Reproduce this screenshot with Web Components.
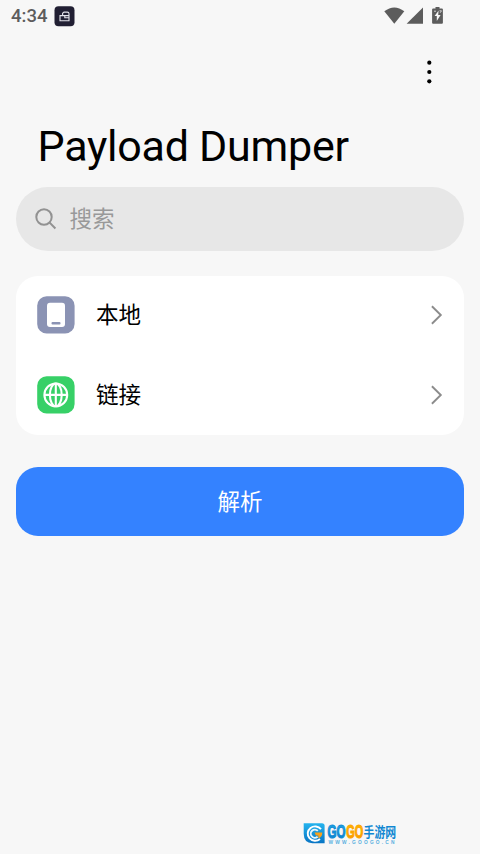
<!DOCTYPE html>
<html lang="zh-CN">
<head>
<meta charset="utf-8">
<meta name="viewport" content="width=device-width, initial-scale=1">
<title>Payload Dumper</title>
<style>
  html, body {
    margin: 0;
    height: 100%;
    background-color: #f7f7f7;
  }
  body {
    overflow: hidden;
    font-family: Roboto, "Noto Sans CJK SC", sans-serif;
    color: #000;
  }
</style>
</head>
<body>
<payload-app></payload-app>
<script>
class StatusBar extends HTMLElement {
  constructor() {
    super()
    this.attachShadow({ mode: "open" })
  }
  connectedCallback() {
    this.shadowRoot.innerHTML = `
      <style>
        :host {
          display: flex;
          align-items: center;
          justify-content: space-between;
          height: 32px;
          padding: 0 36px 0 11px;
          box-sizing: border-box;
          color: #5c5c5c;
        }
        .left, .right {
          display: flex;
          align-items: center;
        }
        .left { gap: 7px; }
        .time {
          font-size: 18.5px;
          font-weight: 500;
          line-height: 32px;
        }
        svg { display: block; }
      </style>
      <div class="left">
        <span class="time">${this.getAttribute("time")}</span>
        <svg width="21" height="21" viewBox="0 0 21 21">
          <rect x=".5" y=".2" width="20" height="20" rx="4" fill="#211f33"/>
          <path d="M6 14.8V9.6h9v5.2zM8.6 9.6V7.3l1.4-1.2h3.4q1.6 0 1.6 1.6v2M10.8 9.6v2.2H15" fill="none" stroke="#e4e4ec" stroke-width="1.1"/>
        </svg>
      </div>
      <div class="right">
        <svg width="60" height="20" viewBox="384 6 60 20" fill="#5c5c5c">
          <path d="M384.3 11.2Q394.3 3.6 404.3 11.2L394.3 23.8z"/>
          <path d="M423 7.4V23.8H406.6z"/>
          <path d="M435.5 7h4v1.6h2.4q1 0 1 1v13.2q0 1-1 1h-8.8q-1 0-1-1V9.6q0-1 1-1h2.4z"/>
          <path d="M438.6 10.4l-4 5.7h2.2v5l3.8-6.2h-2.4z" fill="#f7f7f7"/>
          <path d="M434 11.2h2M439.5 10.8h2l-1.4 2" fill="none" stroke="#dcdcdc" stroke-width=".9"/>
        </svg>
      </div>
    `
  }
}
customElements.define("status-bar", StatusBar)

class TopBar extends HTMLElement {
  constructor() {
    super()
    this.attachShadow({ mode: "open" })
  }
  connectedCallback() {
    this.shadowRoot.innerHTML = `
      <style>
        :host {
          display: block;
          height: 155px;
        }
        .actions {
          display: flex;
          justify-content: flex-end;
          align-items: center;
          height: 80px;
          padding-right: 41px;
        }
        h1 {
          margin: 6px 0 0 37.5px;
          font-size: 43px;
          font-weight: 400;
          line-height: 56px;
          letter-spacing: -.25px;
          white-space: nowrap;
        }
      </style>
      <div class="actions">
        <svg width="20" height="28" viewBox="0 0 20 28">
          <circle cx="10.3" cy="4.7" r="2.1"/>
          <circle cx="10.3" cy="14" r="2.1"/>
          <circle cx="10.3" cy="23.3" r="2.1"/>
        </svg>
      </div>
      <h1><slot></slot></h1>
    `
  }
}
customElements.define("top-bar", TopBar)

class SearchBox extends HTMLElement {
  constructor() {
    super()
    this.attachShadow({ mode: "open" })
  }
  connectedCallback() {
    this.shadowRoot.innerHTML = `
      <style>
        :host {
          display: flex;
          align-items: center;
          gap: 12.5px;
          height: 63.5px;
          padding-left: 19px;
          border-radius: 32px;
          box-sizing: border-box;
          background-color: #e7e7e7;
          color: #999;
          font-size: 22.5px;
          line-height: 32px;
        }
      </style>
      <svg width="22" height="22" viewBox="0 0 22 22" fill="none" stroke="#929292" stroke-width="2">
        <circle cx="9" cy="9" r="7.7"/>
        <path d="M14.4 14.4l6 6.1"/>
      </svg>
      <slot></slot>
    `
  }
}
customElements.define("search-box", SearchBox)

class ListCard extends HTMLElement {
  constructor() {
    super()
    this.attachShadow({ mode: "open" })
  }
  connectedCallback() {
    this.shadowRoot.innerHTML = `
      <style>
        :host {
          display: block;
          border-radius: 22px;
          background-color: #fff;
        }
      </style>
      <slot></slot>
    `
  }
}
customElements.define("list-card", ListCard)

class ListItem extends HTMLElement {
  constructor() {
    super()
    this.attachShadow({ mode: "open" })
  }
  connectedCallback() {
    this.shadowRoot.innerHTML = `
      <style>
        :host {
          display: flex;
          align-items: center;
          height: 79.75px;
          padding: 0 20.5px 0 21px;
          box-sizing: border-box;
        }
        ::slotted(svg) {
          flex: none;
        }
        .label {
          flex: 1;
          margin-left: 21px;
          font-size: 22.5px;
          line-height: 32px;
        }
      </style>
      <slot name="icon"></slot>
      <span class="label"><slot></slot></span>
      <svg width="14" height="20" viewBox="0 0 14 20">
        <path d="M1.9 1.2L10.8 10l-8.9 8.8" fill="none" stroke="#8c8c8c" stroke-width="1.9"/>
      </svg>
    `
  }
}
customElements.define("list-item", ListItem)

class PrimaryButton extends HTMLElement {
  constructor() {
    super()
    this.attachShadow({ mode: "open" })
  }
  connectedCallback() {
    this.shadowRoot.innerHTML = `
      <style>
        :host { display: block; }
        button {
          display: block;
          width: 100%;
          height: 68.5px;
          padding: 2px 0 0;
          border: 0;
          border-radius: 22px;
          background-color: #3482ff;
          color: #fff;
          font-family: inherit;
          font-size: 22.5px;
          line-height: 32px;
          cursor: pointer;
        }
      </style>
      <button><slot></slot></button>
    `
  }
}
customElements.define("primary-button", PrimaryButton)

class SiteMark extends HTMLElement {
  constructor() {
    super()
    this.attachShadow({ mode: "open" })
  }
  connectedCallback() {
    this.shadowRoot.innerHTML = `
      <style>
        :host { display: block; }
        svg { display: block; }
        text { font-family: "Liberation Sans", "Noto Sans CJK SC", sans-serif; font-weight: 700; }
      </style>
      <svg width="96" height="32" viewBox="0 -6 96 32">
        <defs>
          <linearGradient id="blue" x1="0" y1="0" x2="0" y2="1">
            <stop offset="0" stop-color="#25b4ee"/>
            <stop offset="1" stop-color="#0874c4"/>
          </linearGradient>
          <linearGradient id="gold" x1="0" y1="0" x2="0" y2="1">
            <stop offset="0" stop-color="#ffc400"/>
            <stop offset="1" stop-color="#f98b00"/>
          </linearGradient>
        </defs>
        <path d="M.7 1.2H19q2.6 0 2.6 2.6v17.5H9.5Q.7 21 .7 11.5z" fill="url(#blue)"/>
        <path d="M18 7.2A7.4 7.2 0 1 0 17 17" fill="none" stroke="#fff" stroke-width="1.9"/>
        <path d="M14.8 8.8A4.1 4.1 0 1 0 14.6 14.8" fill="none" stroke="#e6f7ff" stroke-width="1.9"/>
        <path d="M11.5 10.6h7.8q0 4.6-4 5.7v-2.8h-2.4z" fill="#f9a11b"/>
        <text x="24.5" y="16" font-size="17.5" textLength="18" lengthAdjust="spacingAndGlyphs" fill="url(#blue)" stroke="#108bd5" stroke-width="1.1">GO</text>
        <text x="43.3" y="16" font-size="17.5" textLength="17" lengthAdjust="spacingAndGlyphs" fill="url(#gold)" stroke="#fda500" stroke-width="1.1">GO</text>
        <g transform="translate(60.6 15.2) scale(.8 1)">
          <text font-size="13.6" fill="#1187d2">手游网</text>
        </g>
        <text x="25.5" y="21.7" font-size="4.8" textLength="66" fill="#58afe0">WWW.GOOGO.CN</text>
      </svg>
    `
  }
}
customElements.define("site-mark", SiteMark)

class PayloadApp extends HTMLElement {
  constructor() {
    super()
    this.attachShadow({ mode: "open" })
  }
  connectedCallback() {
    this.shadowRoot.innerHTML = `
      <style>
        :host {
          display: flex;
          flex-direction: column;
          height: 100vh;
        }
        main {
          display: flex;
          flex-direction: column;
          padding: 0 16px;
        }
        list-card { margin-top: 25px; }
        primary-button { margin-top: 32px; }
        footer {
          display: flex;
          justify-content: flex-end;
          margin-top: auto;
          padding: 0 81px 6px 0;
        }
      </style>
      <status-bar time="4:34"></status-bar>
      <top-bar>Payload Dumper</top-bar>
      <main>
        <search-box>搜索</search-box>
        <list-card>
          <list-item>
            <svg slot="icon" width="38" height="38" viewBox="0 0 38 38">
              <rect x=".2" y=".2" width="37.4" height="37.4" rx="9.5" fill="#8b93b4"/>
              <rect x="10" y="6.8" width="18" height="24.2" rx="3" fill="#fff"/>
              <rect x="14.5" y="25.9" width="9" height="2.5" rx="1" fill="#8b93b4"/>
            </svg>
            本地
          </list-item>
          <list-item>
            <svg slot="icon" width="38" height="38" viewBox="0 0 38 38">
              <rect x=".2" y=".2" width="37.4" height="37.4" rx="9.5" fill="#37d067"/>
              <g fill="none" stroke="#fff" stroke-width="2.1">
                <circle cx="18.8" cy="18.9" r="11.4"/>
                <ellipse cx="18.8" cy="18.9" rx="5.9" ry="11.4"/>
                <path d="M18.8 7.5v22.8M7.4 18.9h22.8"/>
              </g>
            </svg>
            链接
          </list-item>
        </list-card>
        <primary-button>解析</primary-button>
      </main>
      <footer><site-mark></site-mark></footer>
    `
  }
}
customElements.define("payload-app", PayloadApp)
</script>
</body>
</html>
